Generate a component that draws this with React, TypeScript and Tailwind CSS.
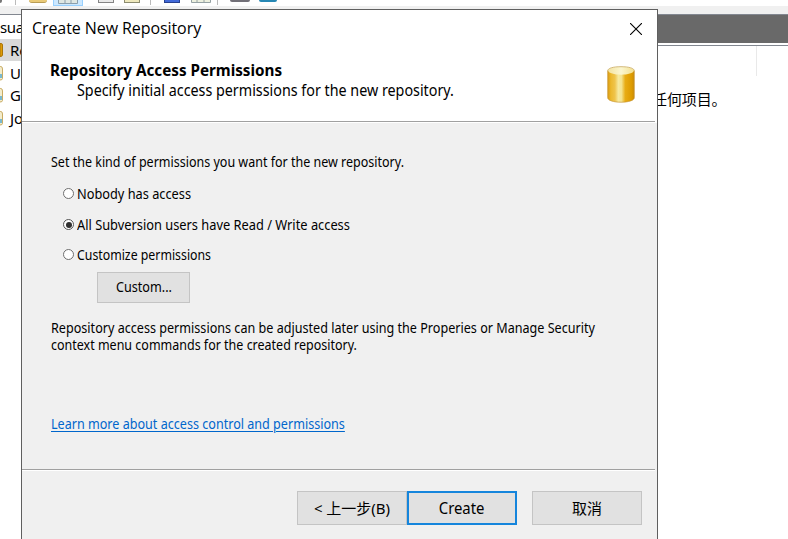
import type { ReactNode } from "react";

const tahoma = "font-['Noto_Sans',sans-serif] text-[13.5px] leading-[18px] whitespace-nowrap";
const yahei =
  "font-['Noto_Sans','Noto_Sans_CJK_SC',sans-serif] text-[15px] leading-[20px] whitespace-nowrap";

function Cylinder({ className }: { className: string }) {
  return (
    <svg viewBox="0 0 28 38" className={className} preserveAspectRatio="none">
      <defs>
        <linearGradient id="body" x1="0" x2="1" y1="0" y2="0">
          <stop offset="0" stopColor="#d99a10" />
          <stop offset="0.12" stopColor="#ecb92e" />
          <stop offset="0.27" stopColor="#efc44c" />
          <stop offset="0.4" stopColor="#f6eaa0" />
          <stop offset="0.52" stopColor="#f4e38e" />
          <stop offset="0.66" stopColor="#e8ac14" />
          <stop offset="0.9" stopColor="#dd9b00" />
          <stop offset="1" stopColor="#c98a08" />
        </linearGradient>
        <linearGradient id="lid" x1="0" x2="1" y1="0" y2="0">
          <stop offset="0" stopColor="#f3e3a0" />
          <stop offset="0.5" stopColor="#fbf6d0" />
          <stop offset="1" stopColor="#f3e08e" />
        </linearGradient>
      </defs>
      <path
        d="M.7 5V32.5c0 2.8 5.5 4.7 13.3 4.7s13.3-1.9 13.3-4.7V5z"
        fill="url(#body)"
        stroke="#c8983a"
        strokeWidth="0.7"
      />
      <path
        d="M1 5C1 2.500 6 .9 14 .9S27 2.500 27 5C26 7.500 21 9 14 9S2 7.500 1 5z"
        fill="url(#lid)"
      />
      <path d="M.7 5C.7 2.300 6 .7 14 .7s13.300 1.600 13.300 4.300" fill="none" stroke="#c9a75a" strokeWidth="0.8" />
    </svg>
  );
}

function TreeGroup() {
  return (
    <svg viewBox="0 0 4 16" className="h-4 w-1 shrink-0">
      <path d="M0 1.5h.8Q2.500 1.500 2.500 4v9.500Q2.500 15 0 15" fill="#f3eccb" stroke="#c8ab63" strokeWidth="1" />
      <path d="M0 9h2v4H0z" fill="#79b9d0" />
    </svg>
  );
}

function Radio({ children, checked, className }: { children: ReactNode; checked?: boolean; className: string }) {
  return (
    <label className={`flex h-[18px] items-center gap-[3px] text-black ${tahoma} ${className}`}>
      <span
        className={`mb-px flex size-[11px] shrink-0 items-center justify-center rounded-full border bg-white ${
          checked ? "border-[#555]" : "border-[#6f6f6f]"
        }`}
      >
        {checked && <span className="size-[6px] rounded-full bg-[#303030]" />}
      </span>
      {children}
    </label>
  );
}

function Button({ children, className }: { children: ReactNode; className: string }) {
  return (
    <button className={`flex items-center justify-center bg-[#e1e1e1] text-black ${className}`}>{children}</button>
  );
}

function Toolbar() {
  return (
    <div className="flex h-[6px] items-start bg-white">
      <span className="h-[3px] w-[2px] rounded-br bg-[#777]" />
      <span className="ml-[13px] h-[5px] w-px bg-[#bbb]" />
      <span className="ml-[13px] h-[3px] w-[18px] rounded-b-sm border-b border-[#b99d55] bg-[#e9ca78]" />
      <span className="ml-[6px] flex h-[6px] w-[30px] justify-center border-x border-b border-[#99d1ff] bg-[#cce8ff]">
        <svg viewBox="0 0 20 4" className="h-1 w-5">
          <path d="M.5 0v3.500h19V0M7 0v3M13 0v3" fill="#dfe7e3" stroke="#8b9fac" />
        </svg>
      </span>
      <span className="ml-[15px] h-[3px] w-4 border-x border-b border-[#858585] bg-[#e9e9e9]" />
      <span className="ml-[10px] h-[3px] w-4 border-x border-b border-[#8c8c70] bg-[#eee8bd]" />
      <span className="ml-[10px] h-[5px] w-px bg-[#bbb]" />
      <span className="ml-[13px] h-[3px] w-4 border-x border-b border-[#27408e] bg-[#4169d8]" />
      <svg viewBox="0 0 20 3" className="ml-[11px] h-[3px] w-5">
        <path d="M.5 0v2.500h19V0M6 0v2M13 0v2" fill="#edf0df" stroke="#96a2a4" />
      </svg>
      <span className="ml-[6px] h-[5px] w-px bg-[#bbb]" />
      <span className="ml-[12px] h-[2px] w-5 rounded-b-sm bg-[#727078]" />
      <span className="ml-[9px] h-[2px] w-[18px] rounded-b-md bg-[#2687b4]" />
    </div>
  );
}

export default function App() {
  return (
    <div className="relative flex h-[539px] w-[788px] flex-col overflow-hidden bg-white text-black">
      <Toolbar />
      <div className="h-2 bg-[#f0f0f0]" />
      <div className="flex flex-1">
        <div className={`w-[218px] border-t border-[#828790] pt-px ${yahei}`}>
          <div className="flex h-[23px] items-center pb-px tracking-[-0.4px]">sua</div>
          <div className="flex h-[22px] items-center gap-[7px] bg-[#d9d9d9]">
            <svg viewBox="0 0 3 14" className="h-[14px] w-[3px]">
              <path d="M0 .5h1Q2.500.5 2.500 2v10q0 1.500-2.500 1.500z" fill="#df9c06" stroke="#a97508" />
            </svg>
            Re
          </div>
          <div className="flex h-[23px] items-center gap-[6px]"><TreeGroup />U</div>
          <div className="flex h-[22px] items-center gap-[6px]"><TreeGroup />G</div>
          <div className="flex h-[23px] items-center gap-[6px]"><TreeGroup />Jo</div>
        </div>
        <div className="flex flex-1 flex-col">
          <div className="h-[29px] border-t border-[#828790] bg-[#696969]" />
          <div className="h-[3px] border-b border-[#828790] bg-white" />
          <div className="flex h-[30px] justify-end">
            <span className="mr-[31px] w-px bg-[#e9e9e9]" />
          </div>
          <div className={`mt-[13px] ml-[434px] tracking-[-0.1px] ${yahei}`}>任何项目。</div>
        </div>
      </div>

      <section className="absolute top-[9px] left-[21px] flex h-[540px] w-[637px] flex-col border border-[#5f5f5f] bg-[#f0f0f0]">
        <header className="flex h-[113px] flex-col bg-white pt-[8px]">
          <div className="flex justify-between pr-[15px] pl-[10px]">
            <h1 className="font-['Open_Sans',sans-serif] text-[16px] leading-5 tracking-[-0.08px] whitespace-nowrap">
              Create New Repository
            </h1>
            <svg viewBox="0 0 12 12" className="mt-[5px] h-3 w-3">
              <path d="M0 0l12 12M12 0L0 12" stroke="#000" strokeWidth="1.1" />
            </svg>
          </div>
          <div className="mt-[22px] flex justify-between pr-[22px] pl-7">
            <div className={yahei}>
              <h2 className="w-max origin-left scale-x-[.951] text-[16px] leading-[20px] font-bold">
                Repository Access Permissions
              </h2>
              <p className="ml-[27px] w-max origin-left scale-x-[.923] text-[15.5px] leading-[20px]">
                Specify initial access permissions for the new repository.
              </p>
            </div>
            <Cylinder className="mt-[6px] -ml-10 h-[37px] w-7 shrink-0" />
          </div>
        </header>
        <div className="-mt-[2px] mr-[2px] h-[2px] border-t border-[#a0a0a0] bg-white" />

        <main className="flex h-[346px] flex-col items-start pt-[30px] pl-[29px]">
          <p className={`origin-left scale-x-[.926] ${tahoma}`}>
            Set the kind of permissions you want for the new repository.
          </p>
          <Radio className="mt-[14px] ml-3">
            <span className="origin-left scale-x-[.946]">Nobody has access</span>
          </Radio>
          <Radio checked className="mt-[13px] ml-3">
            <span className="origin-left scale-x-[.95]">All Subversion users have Read / Write access</span>
          </Radio>
          <Radio className="mt-[12px] ml-3">
            <span className="origin-left scale-x-[.912]">Customize permissions</span>
          </Radio>
          <Button className={`mt-[8px] ml-[46px] h-[31px] w-[93px] border border-[#c4c4c4] pb-px ${tahoma}`}>
            <span className="scale-x-[.935]">Custom...</span>
          </Button>
          <div className={`mt-[16px] flex flex-col items-start ${tahoma}`}>
            <span className="origin-left scale-x-[.933]">
              Repository access permissions can be adjusted later using the Properies or Manage Security
            </span>
            <span className="-mt-px origin-left scale-x-[.925]">context menu commands for the created repository.</span>
          </div>
          <a className={`mt-[61px] origin-left scale-x-[.932] text-[#0066cc] underline decoration-1 underline-offset-2 ${tahoma}`}>
            Learn more about access control and permissions
          </a>
        </main>

        <div className="mr-[2px] h-[2px] border-t border-[#a0a0a0] bg-white" />
        <footer className={`mt-[20px] flex justify-end pr-[15px] ${yahei}`}>
          <Button className="h-[34px] w-[110px] border border-[#c4c4c4]">&lt; 上一步(B)</Button>
          <Button className="h-[34px] w-[110px] border-2 border-[#1585dc]">
            <span className="scale-x-[.93] text-[16px]">Create</span>
          </Button>
          <Button className="ml-[15px] h-[34px] w-[110px] border border-[#c4c4c4]">取消</Button>
        </footer>
      </section>
    </div>
  );
}
